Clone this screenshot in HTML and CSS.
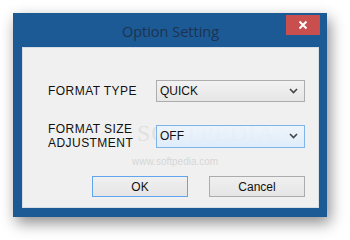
FILE: index.html
```html
<!DOCTYPE html>
<html lang="en">
<head>
  <meta charset="UTF-8">
  <title>Option Setting</title>
  <link rel="stylesheet" href="styles.css">
</head>
<body>
  <div class="window">
    <div class="titlebar">
      <span class="title">Option Setting</span>
      <button class="close">
        <svg width="10" height="10" viewBox="0 0 10 10"><path d="M1.5 1.5L8.5 8.5M8.5 1.5L1.5 8.5" stroke="#fff" stroke-width="2"/></svg>
      </button>
    </div>
    <div class="client">
      <div class="watermark">SOFTPEDIA<sup>™</sup></div>
      <div class="wwwmark">www.softpedia.com</div>
      <div class="row">
        <label class="label">FORMAT TYPE</label>
        <div class="combo">
          <span>QUICK</span>
          <svg width="9" height="6" viewBox="0 0 9 6"><path d="M1 1l3.5 3.5L8 1" fill="none" stroke="#444" stroke-width="1.6"/></svg>
        </div>
      </div>
      <div class="row two">
        <label class="label">FORMAT SIZE<br>ADJUSTMENT</label>
        <div class="combo focus">
          <span>OFF</span>
          <svg width="9" height="6" viewBox="0 0 9 6"><path d="M1 1l3.5 3.5L8 1" fill="none" stroke="#444" stroke-width="1.6"/></svg>
        </div>
      </div>
      <div class="buttons">
        <button class="btn default">OK</button>
        <button class="btn">Cancel</button>
      </div>
    </div>
  </div>
</body>
</html>
```

FILE: styles.css
```css
html, body { margin: 0; height: 100%; background: #fff; overflow: hidden; }
body { font-family: 'Liberation Sans', Arial, sans-serif; }
button { font-family: inherit; cursor: pointer; }
/* window frame */
.window {
  margin: 13px 0 0 13px; width: 314px; height: 204px; box-sizing: border-box;
  background: #1c5a96; padding: 0 8px 9px 9px;
  box-shadow: 3px 6px 14px rgba(0,0,0,0.45);
  display: flex; flex-direction: column;
}
.titlebar { position: relative; height: 34px; display: flex; align-items: center; justify-content: center; }
.title { font-family: 'Open Sans', sans-serif; font-size: 14.5px; color: #1d3350; margin-top: 2px; }
.close {
  position: absolute; top: 2px; right: -1px; width: 34px; height: 20px;
  background: #c94f4f; border: none; padding: 0;
  display: flex; align-items: center; justify-content: center;
}
/* client area */
.client {
  position: relative; flex: 1; background: #f0f0f0; border: 1px solid #d6dde6;
  padding: 32px 13px 0 25px;
}
.row { position: relative; display: flex; align-items: center; height: 22px; }
.row.two { margin-top: 22px; height: 24px; }
.label { width: 108px; font-size: 12px; line-height: 14px; color: #111; letter-spacing: 0.45px; }
.combo {
  width: 149px; height: 22px; box-sizing: border-box;
  border: 1px solid #adadad; background: linear-gradient(#f2f2f2, #e6e6e6);
  display: flex; align-items: center; justify-content: space-between;
  padding: 0 6px 0 3px; font-size: 12px; color: #111;
}
.combo.focus { border-color: #7eb4ea; background: linear-gradient(rgba(238,245,252,0.85), rgba(220,236,252,0.85)); height: 23px; }
.buttons { display: flex; gap: 21px; margin: 28px 0 0 44px; }
.btn {
  width: 96px; height: 21px; padding: 0; font-size: 12px; color: #111;
  border: 1px solid #acacac; background: linear-gradient(#f0f0f0, #e5e5e5);
}
.btn.default { border-color: #5fa6ee; }
/* faint watermark behind the controls */
.watermark {
  position: absolute; left: 114px; top: 72px; font-family: 'Liberation Serif', serif;
  font-size: 24px; color: rgba(200,200,200,0.4); letter-spacing: 1px; pointer-events: none;
}
.watermark sup { font-size: 8px; }
.wwwmark {
  position: absolute; left: 109px; top: 108px; font-size: 10px;
  color: rgba(190,190,190,0.55); pointer-events: none;
}
```
